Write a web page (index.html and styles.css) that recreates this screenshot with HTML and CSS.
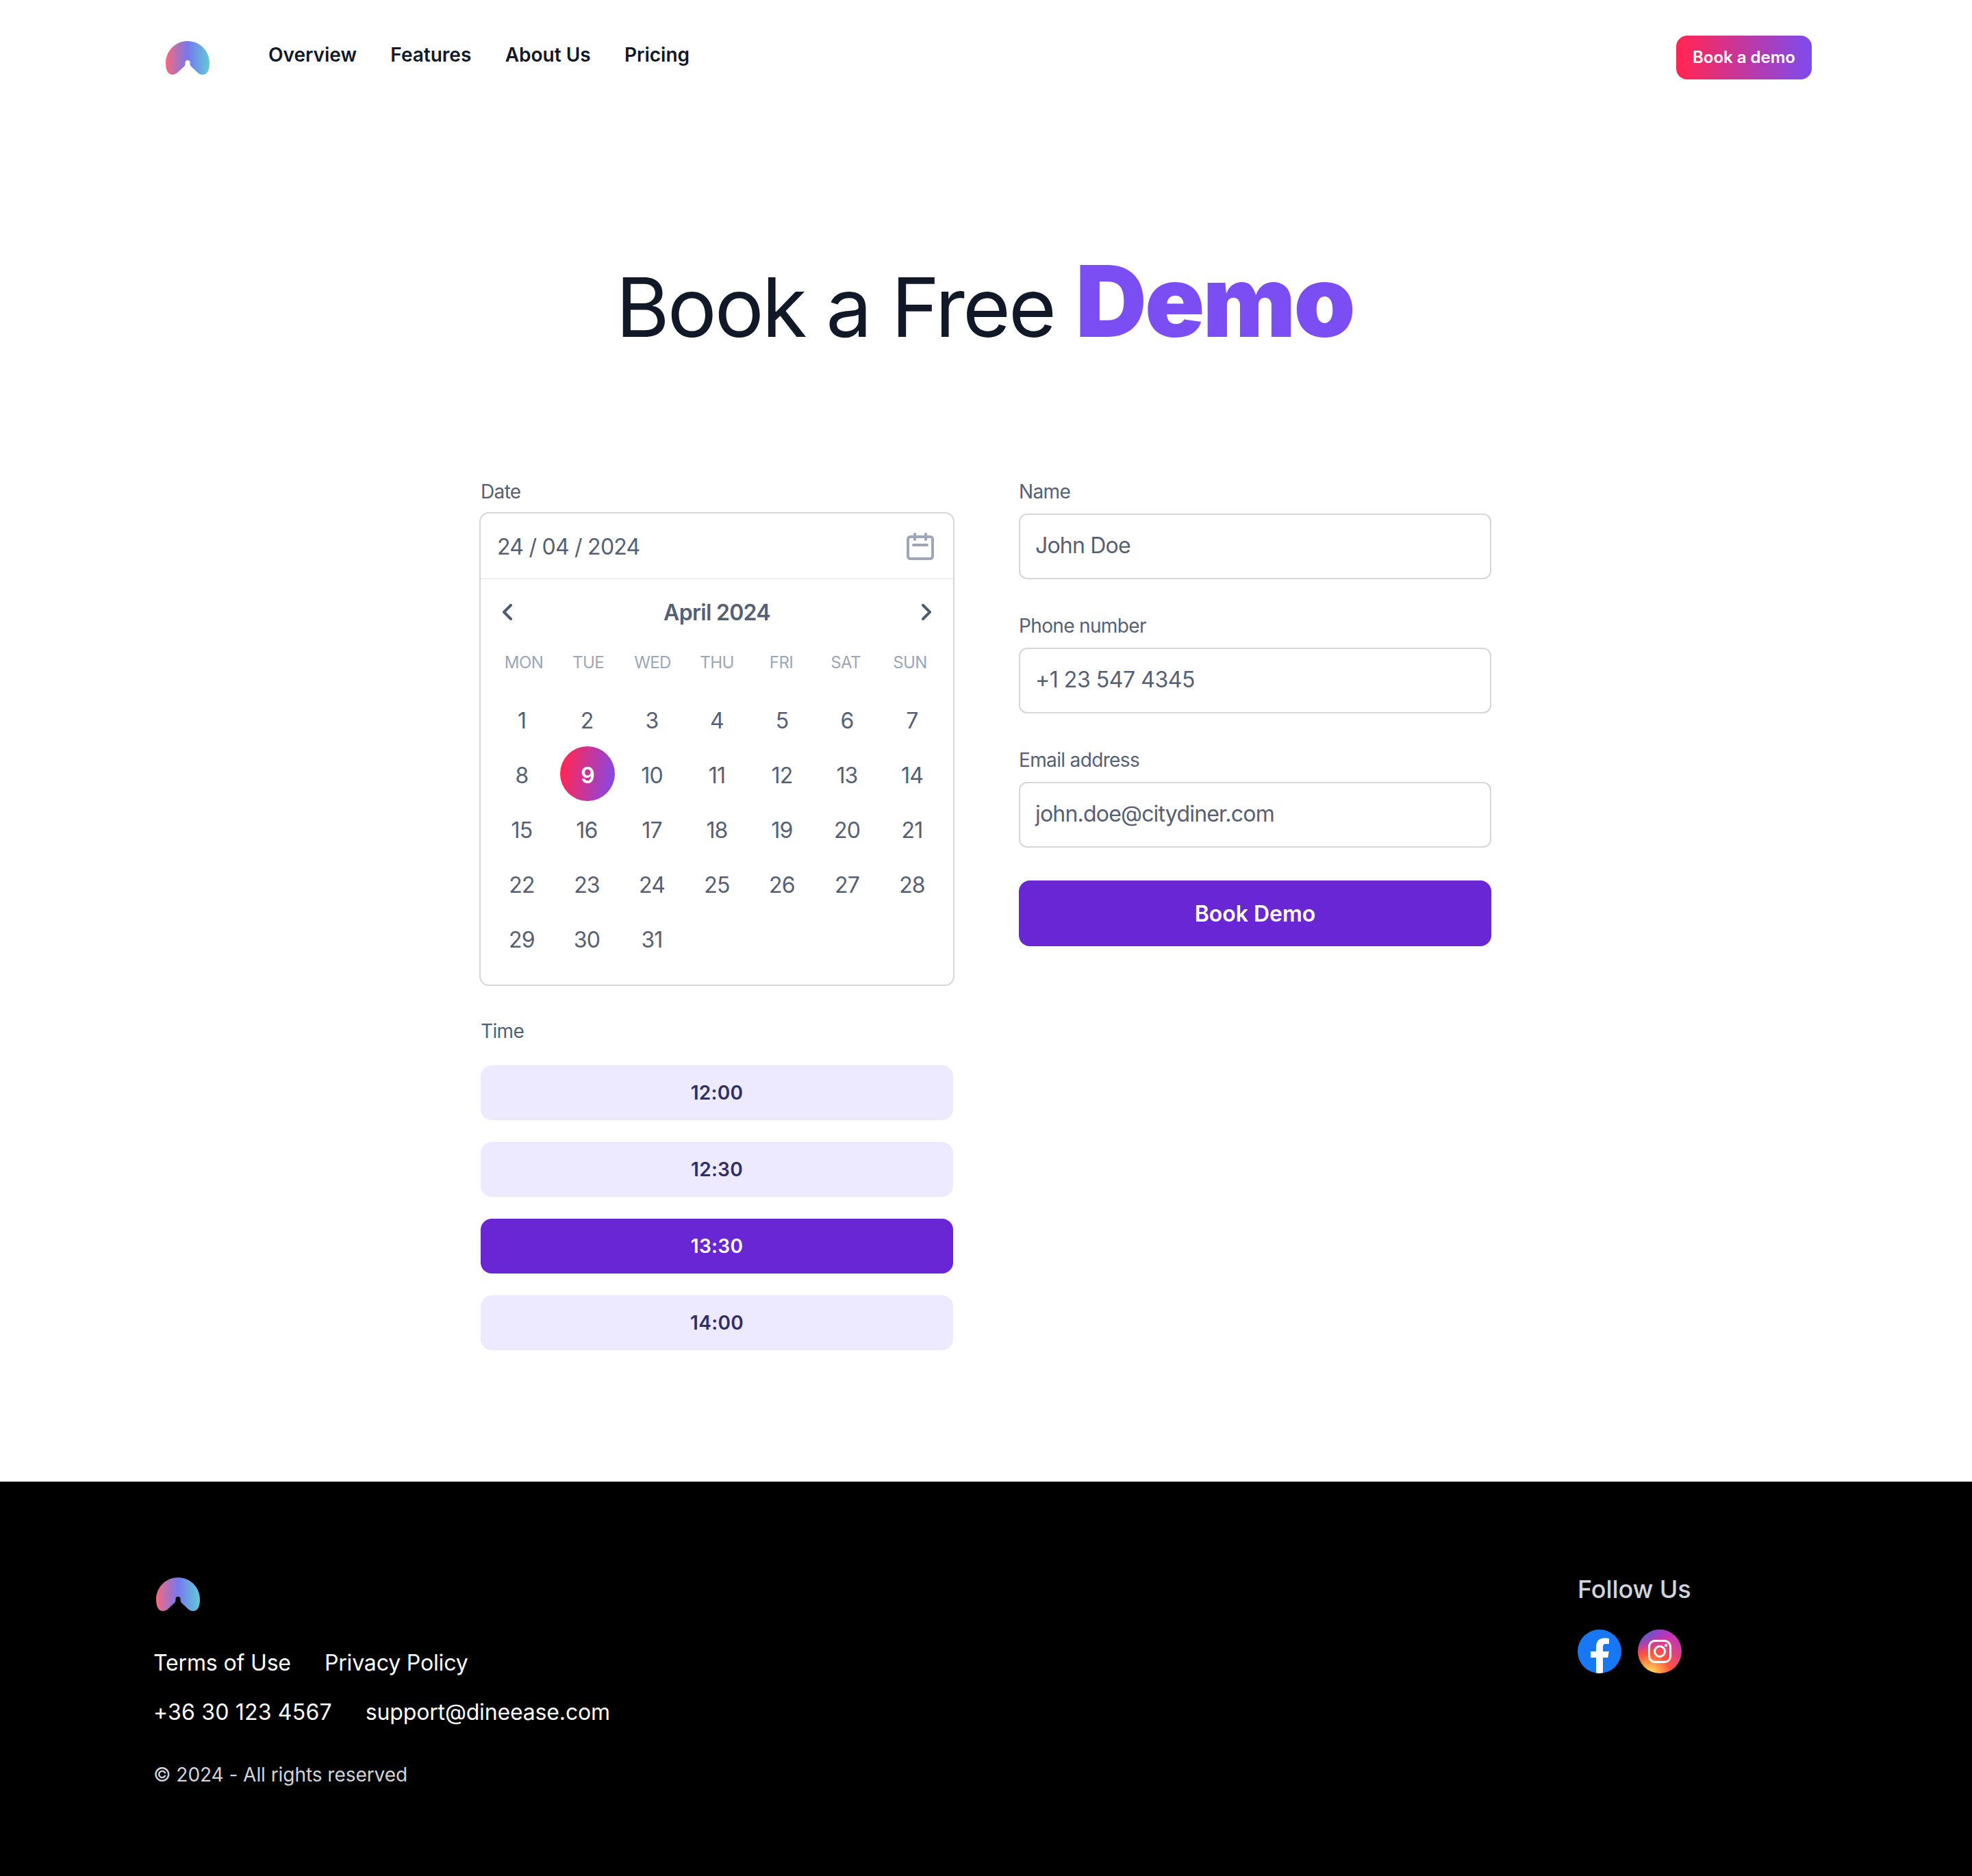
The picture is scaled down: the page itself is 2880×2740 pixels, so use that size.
FILE: index.html
```html
<!DOCTYPE html>
<html lang="en">
<head>
<meta charset="utf-8">
<title>Book a Free Demo</title>
<link rel="stylesheet" href="styles.css">
</head>
<body>
<header class="nav">
  <svg class="logo" viewBox="0 0 64 49">
    <defs><linearGradient id="brand" x1="0" x2="1" y1="0" y2="0"><stop offset="0" stop-color="#f7697c"/><stop offset=".5" stop-color="#7678ed"/><stop offset="1" stop-color="#60cbd8"/></linearGradient></defs>
    <path fill="url(#brand)" d="M32 0C49.700 0 64 14.300 64 32C64 42 61 49 54 49C49 49 46 45.500 43 42.500L37 37C35.700 35.800 35.500 34.500 35.500 33V31.500A3.500 3.500 0 0 0 28.500 31.500V33C28.500 34.500 28.300 35.800 27 37L21 42.500C18 45.500 15 49 10 49C3 49 0 42 0 32C0 14.300 14.300 0 32 0Z"/>
  </svg>
  <nav class="links">
    <a>Overview</a><a>Features</a><a>About Us</a><a>Pricing</a>
  </nav>
  <button class="cta">Book a demo</button>
</header>

<main class="page">
  <h1 class="title">Book a Free <span class="accent">Demo</span></h1>
  <div class="form">
    <section class="col">
      <label class="label">Date</label>
      <div class="calendar">
        <div class="date-row">
          <span class="date-value">24 / 04 / 2024</span>
          <svg class="cal-icon" viewBox="0 0 40 40" fill="none" stroke="#9ca6ba" stroke-width="4" stroke-linecap="round" stroke-linejoin="round"><rect x="2" y="6" width="36" height="32" rx="3.500"/><path d="M12 2v8M28 2v8M10 18h20"/></svg>
        </div>
        <div class="month-row">
          <svg class="chevron" viewBox="0 0 14 24"><path d="M12 2L2 12L12 22"/></svg>
          <span>April 2024</span>
          <svg class="chevron" viewBox="0 0 14 24"><path d="M2 2L12 12L2 22"/></svg>
        </div>
        <div class="weekdays"><span>MON</span><span>TUE</span><span>WED</span><span>THU</span><span>FRI</span><span>SAT</span><span>SUN</span></div>
        <div class="days">
          <span>1</span><span>2</span><span>3</span><span>4</span><span>5</span><span>6</span><span>7</span>
          <span>8</span><span class="picked">9</span><span>10</span><span>11</span><span>12</span><span>13</span><span>14</span>
          <span>15</span><span>16</span><span>17</span><span>18</span><span>19</span><span>20</span><span>21</span>
          <span>22</span><span>23</span><span>24</span><span>25</span><span>26</span><span>27</span><span>28</span>
          <span>29</span><span>30</span><span>31</span>
        </div>
      </div>
      <label class="label label-time">Time</label>
      <div class="slots">
        <button class="slot">12:00</button>
        <button class="slot">12:30</button>
        <button class="slot slot-on">13:30</button>
        <button class="slot">14:00</button>
      </div>
    </section>
    <section class="col col-fields">
      <div class="field"><label class="label">Name</label><div class="input">John Doe</div></div>
      <div class="field"><label class="label">Phone number</label><div class="input input-phone">+1 23 547 4345</div></div>
      <div class="field"><label class="label">Email address</label><div class="input">john.doe@citydiner.com</div></div>
      <button class="submit">Book Demo</button>
    </section>
  </div>
</main>

<footer class="footer">
  <div class="foot-left">
    <svg class="logo foot-logo" viewBox="0 0 64 49"><path fill="url(#brand)" d="M32 0C49.700 0 64 14.300 64 32C64 42 61 49 54 49C49 49 46 45.500 43 42.500L37 37C35.700 35.800 35.500 34.500 35.500 33V31.500A3.500 3.500 0 0 0 28.500 31.500V33C28.500 34.500 28.300 35.800 27 37L21 42.500C18 45.500 15 49 10 49C3 49 0 42 0 32C0 14.300 14.300 0 32 0Z"/></svg>
    <div class="foot-row"><a>Terms of Use</a><a>Privacy Policy</a></div>
    <div class="foot-row"><a class="foot-phone">+36 30 123 4567</a><a>support@dineease.com</a></div>
    <p class="copy">© 2024 - All rights reserved</p>
  </div>
  <div class="foot-right">
    <div class="follow">Follow Us</div>
    <div class="social">
      <svg viewBox="0 0 64 64"><defs><clipPath id="disc"><circle cx="32" cy="32" r="32"/></clipPath></defs><g clip-path="url(#disc)"><rect width="64" height="64" fill="#1877f2"/><path fill="#fff" d="M27 64V41H19V32H27V26.500C27 17.500 31 12.600 39.500 12.600C42.500 12.600 44.500 12.800 46 13.200V21H41.500C38 21 37 22.800 37 26V32H45.700L44.300 41H37V64Z"/></g></svg>
      <svg viewBox="0 0 64 64"><defs>
        <radialGradient id="warm" gradientUnits="userSpaceOnUse" cx="17" cy="66" r="62"><stop offset="0" stop-color="#ffdd55"/><stop offset=".12" stop-color="#ffcb52"/><stop offset=".5" stop-color="#ff543e"/><stop offset="1" stop-color="#c837ab"/></radialGradient>
        <radialGradient id="cool" gradientUnits="userSpaceOnUse" cx="0" cy="0" r="46" gradientTransform="translate(-2 5) rotate(-18) scale(1.5 .68)"><stop offset="0" stop-color="#3771c8"/><stop offset=".25" stop-color="#5a5fd0"/><stop offset="1" stop-color="#a020e0" stop-opacity="0"/></radialGradient></defs>
        <circle cx="32" cy="32" r="32" fill="url(#warm)"/><circle cx="32" cy="32" r="32" fill="url(#cool)"/>
        <g fill="none" stroke="#fff" stroke-width="3"><rect x="16.500" y="16.500" width="31" height="31" rx="8.500"/><circle cx="32" cy="32" r="7.500"/></g><circle cx="41" cy="23" r="2.200" fill="#fff"/></svg>
    </div>
  </div>
</footer>
</body>
</html>
```
FILE: styles.css
```css
* { box-sizing: border-box; }
body { margin: 0; width: 2880px; background: #fff; font-family: Inter, "Liberation Sans", sans-serif; color: #111827; }
button { border: 0; font-family: inherit; padding: 0; }
svg { display: block; flex: none; }

.nav { display: flex; height: 168px; padding: 52px 234px 0 242px; }
.logo { width: 64px; height: 49px; margin-top: 8px; }
.links { display: flex; gap: 49.4px; margin-left: 86px; padding-top: 8px; font-size: 28px; font-weight: 600; line-height: 40px; letter-spacing: 0; }
.cta { width: 198px; height: 64px; margin-left: auto; padding-bottom: 2px; border-radius: 16px; background: linear-gradient(90deg, #ff2656 5%, #7c4bf0); color: #fff; font-size: 24px; font-weight: 600; }

.page { height: 1996px; padding-top: 200px; }
.title { height: 144px; margin: 0; padding-right: 4px; text-align: center; font-size: 120px; font-weight: 400; line-height: 144px; letter-spacing: -3px; color: #111827; }
.accent { font-size: 144px; font-weight: 900; color: #7a4ef3; letter-spacing: -2.8px; }
.form { display: flex; gap: 94px; margin-top: 186px; padding-left: 700px; }
.col { width: 694px; }
.col-fields { width: 690px; }
.label { display: block; height: 40px; font-size: 28px; line-height: 40px; letter-spacing: -0.65px; color: #556074; }
.col > .label { padding-left: 2px; }

.calendar { height: 692px; margin-top: 10px; border: 2px solid #d5d6d8; border-radius: 14px; font-size: 32px; color: #556074; }
.date-row { display: flex; justify-content: space-between; align-items: center; height: 96px; padding: 0 28px 0 24px; border-bottom: 2px solid #eeeff2; letter-spacing: -0.75px; }
.date-value { padding-top: 2px; }
.cal-icon { width: 40px; height: 40px; margin-top: 2px; }
.month-row { display: flex; justify-content: space-between; align-items: center; height: 96px; padding: 0 32px 0 32px; font-weight: 600; letter-spacing: -0.7px; }
.chevron { width: 14px; height: 24px; fill: none; stroke: #4f5b70; stroke-width: 4; stroke-linecap: round; stroke-linejoin: round; }
.weekdays { display: grid; grid-template-columns: repeat(7, 94px); padding-left: 16px; height: 50px; font-size: 24px; line-height: 52px; text-align: center; letter-spacing: -0.6px; color: #9ca6ba; }
.days { display: grid; grid-template-columns: repeat(7, 80px); grid-auto-rows: 80px; column-gap: 15px; margin-top: 18px; padding-left: 20px; text-align: center; line-height: 86px; letter-spacing: -0.8px; }
.picked { width: 80px; margin-left: 1px; border-radius: 50%; background: linear-gradient(100deg, #ff2656 10%, #7c4bf0); color: #fff; font-weight: 600; }

.label-time { margin-top: 46px; }
.slots { display: grid; gap: 32px; margin-top: 30px; padding: 0 2px; }
.slot { height: 80px; border-radius: 16px; background: #ede9fe; color: #312e66; font-size: 28px; font-weight: 600; letter-spacing: 0.3px; }
.slot-on { background: #6926d5; color: #fff; }

.field { height: 196px; }
.input { height: 96px; margin-top: 12px; padding-left: 22px; border: 2px solid #d5d6d8; border-radius: 12px; font-size: 32px; line-height: 90px; letter-spacing: -0.8px; color: #556074; }
.input-phone { letter-spacing: -0.45px; }
.submit { display: block; width: 690px; height: 96px; border-radius: 16px; background: #6926d5; color: #fff; font-size: 32px; font-weight: 600; }

.footer { display: flex; justify-content: space-between; height: 576px; padding: 132px 410px 0 224px; background: #000; color: #fff; }
.foot-logo { margin: 8px 0 51px 4px; }
.foot-row { display: flex; gap: 49px; height: 72px; font-size: 32px; line-height: 50px; letter-spacing: -0.15px; }
.foot-phone { letter-spacing: 0.2px; }
.copy { margin: 24px 0 0; font-size: 28px; line-height: 40px; letter-spacing: -0.05px; color: #d1d5db; }
.follow { font-size: 36px; font-weight: 500; line-height: 50px; letter-spacing: -0.1px; white-space: nowrap; color: #d1d5db; }
.foot-right { width: 166px; }
.social { display: flex; gap: 24px; margin-top: 34px; }
.social svg { width: 64px; height: 64px; }
```
